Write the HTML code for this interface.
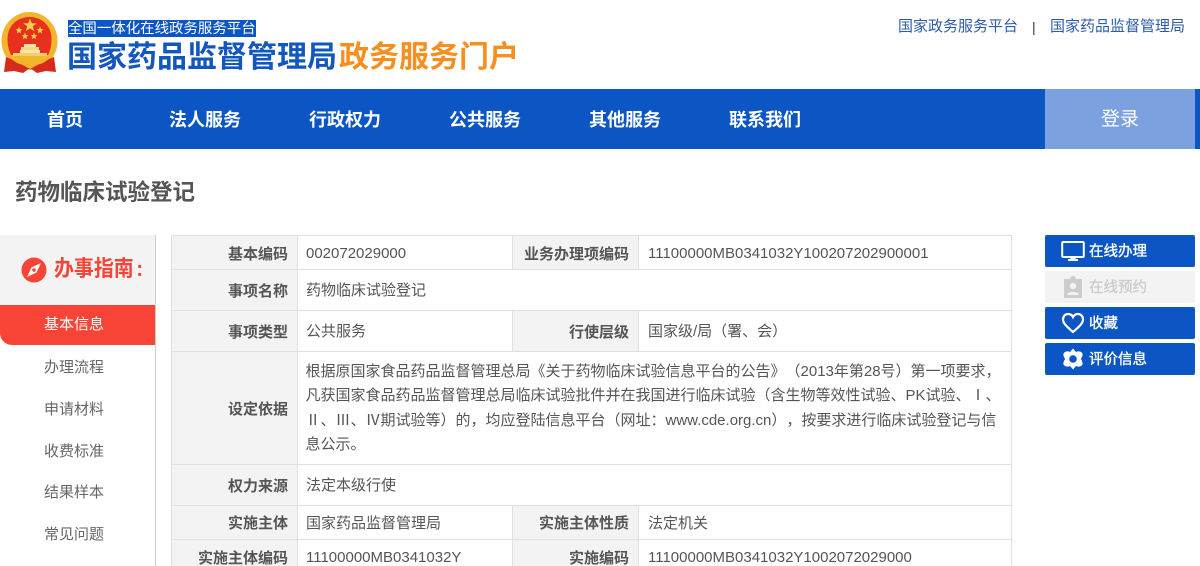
<!DOCTYPE html>
<html lang="zh-CN"><head><meta charset="utf-8"><title>药物临床试验登记</title>
<style>
*{box-sizing:border-box;margin:0;padding:0}
html,body{width:1200px;height:566px;overflow:hidden;background:#fff}
body{position:relative;font-family:"Liberation Sans","Noto Sans CJK SC",sans-serif;color:#555;font-size:15px;text-spacing-trim:space-all}
.a{position:absolute;white-space:nowrap}
.nav{position:absolute;left:0;top:89px;width:1200px;height:60px;background:#0b56c4}
.nav .i{position:absolute;top:1px;line-height:60px;color:#fff;font-size:18px;font-weight:bold}
.side{position:absolute;left:-1px;width:150px;text-align:center;font-size:15px;color:#666;line-height:42px;height:42px}
.c{position:absolute;border-right:1px solid #e0e0e0;border-bottom:1px solid #e0e0e0;font-size:15px;color:#555;padding-left:9px;display:flex;align-items:center;white-space:nowrap}
.m{padding-left:8px}
.u{padding-bottom:2px}
.d{padding-top:2px}
.l{background:#f3f3f3;font-weight:bold;justify-content:flex-end;padding-left:0;padding-right:9px;color:#555}
.b{position:absolute;left:1045px;width:150px;height:32px;background:#0b56c4;border-radius:2px;color:#fff;font-size:14.500px;line-height:34px;padding-left:44px;-webkit-text-stroke:.35px currentColor}
.b svg{position:absolute;left:16px;top:4px}
</style></head><body>
<svg class="a" style="left:1px;top:12px" width="58" height="62" viewBox="0 0 58 62">
<ellipse cx="28.500" cy="29" rx="28" ry="29" fill="#f2b52c"/>
<path d="M6.500 27 C6.500 13 17 5 28.500 5 C40 5 50.500 13 50.500 27 C50.500 34 49 39 47 43 H10 C8 39 6.500 34 6.500 27Z" fill="#e8301f"/>
<polygon points="29,6.500 30.800,11.300 35.800,11.300 31.800,14.400 33.300,19.300 29,16.400 24.700,19.300 26.200,14.400 22.200,11.300 27.200,11.300" fill="#f8cf45"/>
<polygon points="18,14.500 19,17 21.500,17.300 19.500,19 20.200,21.500 18,20.100 15.800,21.500 16.500,19 14.500,17.300 17,17" fill="#f8cf45"/>
<polygon points="39,14.500 40,17 42.500,17.300 40.500,19 41.200,21.500 39,20.100 36.800,21.500 37.500,19 35.500,17.300 38,17" fill="#f8cf45"/>
<polygon points="24,20.500 25,23 27.300,23.200 25.500,24.800 26.100,27.200 24,25.900 21.900,27.200 22.500,24.800 20.700,23.200 23,23" fill="#f8cf45"/>
<polygon points="33,20.500 34,23 36.300,23.200 34.500,24.800 35.100,27.200 33,25.900 30.900,27.200 31.500,24.800 29.700,23.200 32,23" fill="#f8cf45"/>
<rect x="23" y="32" width="12" height="3" fill="#fbe6a8"/><rect x="20" y="35" width="18" height="3" fill="#f8d885"/>
<rect x="19" y="38" width="20" height="3" fill="#fbe6a8"/><rect x="12" y="41" width="34" height="3" fill="#f6ce6c"/>
<path d="M5 45 L10 47 L16 51 L22 53 L29 54 L36 53 L42 51 L48 47 L53 45 L55 60 L45 59 L36 61 L29 56 L22 61 L13 59 L3 60Z" fill="#d62a1c"/>
<path d="M17 46 H41 L38 52 L31 56 H27 L20 52Z" fill="#f2b52c"/>
</svg>
<div class="a" style="left:68px;top:20px;height:17px;line-height:19px;background:#0b56c4;color:#fff;font-size:14.450px">全国一体化在线政务服务平台</div>
<div class="a" style="left:67px;top:40px;line-height:36px;font-size:30px;font-weight:bold;color:#1257bd">国家药品监督管理局<span style="color:#f68f1f;margin-left:2px">政务服务门户</span></div>
<div class="a" style="left:898px;top:17px;line-height:20px;color:#2c5ba8;font-size:15px">国家政务服务平台</div>
<div class="a" style="left:1032px;top:17px;line-height:20px;color:#333;font-size:14px">|</div>
<div class="a" style="left:1050px;top:17px;line-height:20px;color:#2c5ba8;font-size:15px">国家药品监督管理局</div>

<div class="nav">
<div class="i" style="left:47px">首页</div>
<div class="i" style="left:169px">法人服务</div>
<div class="i" style="left:309px">行政权力</div>
<div class="i" style="left:449px">公共服务</div>
<div class="i" style="left:589px">其他服务</div>
<div class="i" style="left:729px">联系我们</div>
<div style="position:absolute;left:1045px;top:1px;width:150px;height:59px;background:#7ba2de;color:#fff;font-size:19px;text-align:center;line-height:59px">登录</div>
<div style="position:absolute;left:1045px;top:0;width:150px;height:1px;background:#7ba2de"></div>
</div>

<div class="a" style="left:15px;top:178px;line-height:30px;font-size:22.500px;font-weight:bold;color:#555">药物临床试验登记</div>

<div class="a" style="left:0;top:235px;width:155px;height:70px;background:#f3f3f3"></div>
<div class="a" style="left:155px;top:235px;width:1px;height:331px;background:#ccc"></div>
<svg class="a" style="left:21px;top:257px" width="26" height="26" viewBox="0 0 26 26"><circle cx="13" cy="13" r="12.500" fill="#f84437"/><path d="M20 6 L15.500 15.500 L6 20 L10.500 10.500Z" fill="#fff"/><circle cx="13" cy="13" r="1.800" fill="#f84437"/></svg>
<div class="a" style="left:54px;top:253px;line-height:32px;font-size:22px;font-weight:bold;color:#f84437;transform:scaleX(.905);transform-origin:0 50%">办事指南<span style="margin-left:3px">:</span></div>
<div class="side" style="top:305px;left:0;width:155px;height:40px;line-height:40px;background:#f84437;color:#fff;border-bottom-left-radius:12px;padding-right:7px">基本信息</div>
<div class="side" style="top:347px">办理流程</div>
<div class="side" style="top:389px">申请材料</div>
<div class="side" style="top:431px">收费标准</div>
<div class="side" style="top:472px">结果样本</div>
<div class="side" style="top:514px">常见问题</div>

<div class="a" style="left:171px;top:235px;width:841px;height:1px;background:#e0e0e0"></div>
<div class="a" style="left:171px;top:235px;width:1px;height:331px;background:#e0e0e0"></div>

<div class="c l d" style="left:172px;top:236px;width:126px;height:34px">基本编码</div>
<div class="c m d" style="left:298px;top:236px;width:215px;height:34px">002072029000</div>
<div class="c l d" style="left:513px;top:236px;width:126px;height:34px">业务办理项编码</div>
<div class="c d" style="left:639px;top:236px;width:373px;height:34px">11100000MB0341032Y100207202900001</div>

<div class="c l" style="left:172px;top:270px;width:126px;height:41px">事项名称</div>
<div class="c m u" style="left:298px;top:270px;width:714px;height:41px">药物临床试验登记</div>

<div class="c l" style="left:172px;top:311px;width:126px;height:41px">事项类型</div>
<div class="c m u" style="left:298px;top:311px;width:215px;height:41px">公共服务</div>
<div class="c l" style="left:513px;top:311px;width:126px;height:41px">行使层级</div>
<div class="c u" style="left:639px;top:311px;width:373px;height:41px">国家级/局（署、会）</div>

<div class="c l" style="left:172px;top:352px;width:126px;height:113px">设定依据</div>
<div class="c" style="left:298px;top:352px;width:714px;height:113px;padding:8px 0 0 7.500px;line-height:24.400px;display:block">根据原国家食品药品监督管理总局《关于药物临床试验信息平台的公告》（2013年第28号）第一项要求，<br>凡获国家食品药品监督管理总局临床试验批件并在我国进行临床试验（含生物等效性试验、PK试验、Ⅰ、<br>Ⅱ、Ⅲ、Ⅳ期试验等）的，均应登陆信息平台（网址：www.cde.org.cn），按要求进行临床试验登记与信<br>息公示。</div>

<div class="c l" style="left:172px;top:465px;width:126px;height:41px">权力来源</div>
<div class="c m u" style="left:298px;top:465px;width:714px;height:41px">法定本级行使</div>

<div class="c l" style="left:172px;top:506px;width:126px;height:34px">实施主体</div>
<div class="c m" style="left:298px;top:506px;width:215px;height:34px">国家药品监督管理局</div>
<div class="c l" style="left:513px;top:506px;width:126px;height:34px">实施主体性质</div>
<div class="c" style="left:639px;top:506px;width:373px;height:34px">法定机关</div>

<div class="c l d" style="left:172px;top:540px;width:126px;height:34px">实施主体编码</div>
<div class="c m d" style="left:298px;top:540px;width:215px;height:34px">11100000MB0341032Y</div>
<div class="c l d" style="left:513px;top:540px;width:126px;height:34px">实施编码</div>
<div class="c d" style="left:639px;top:540px;width:373px;height:34px">11100000MB0341032Y1002072029000</div>

<div class="b" style="top:235px"><svg width="24" height="24" viewBox="0 0 24 24"><rect x="1.200" y="3" width="21.600" height="15" rx="1" fill="none" stroke="#fff" stroke-width="2"/><rect x="9.500" y="18" width="5" height="2" fill="#fff"/><rect x="7" y="20" width="10" height="2" fill="#fff"/></svg>在线办理</div>
<div class="b" style="top:271px;background:#f3f3f3;color:#ccc"><svg width="24" height="24" viewBox="0 0 24 24"><path d="M3 4h6a3 3 0 0 1 6 0h6v19H3z" fill="#ccc"/><circle cx="12" cy="11" r="3.200" fill="#f3f3f3"/><path d="M6 20c0-4 12-4 12 0z" fill="#f3f3f3"/></svg>在线预约</div>
<div class="b" style="top:307px"><svg width="24" height="24" viewBox="0 0 24 24"><path d="M12 21 C5 15 2 12 2 8.500 C2 5 4.500 3 7 3 C9 3 11 4 12 6 C13 4 15 3 17 3 C19.500 3 22 5 22 8.500 C22 12 19 15 12 21Z" fill="none" stroke="#fff" stroke-width="2.200"/></svg>收藏</div>
<div class="b" style="top:343px"><svg width="24" height="24" viewBox="0 0 24 24"><path d="M12 1.500 L15 5 C17 4 20 4 21.500 6.500 C22 9 20.500 10.500 20 12 C20.500 13.500 22 15 21.500 17.500 C20 20 17 20 15 19 L12 22.500 L9 19 C7 20 4 20 2.500 17.500 C2 15 3.500 13.500 4 12 C3.500 10.500 2 9 2.500 6.500 C4 4 7 4 9 5Z" fill="#fff"/><circle cx="12" cy="12" r="3.800" fill="#0b56c4"/></svg>评价信息</div>
</body></html>
